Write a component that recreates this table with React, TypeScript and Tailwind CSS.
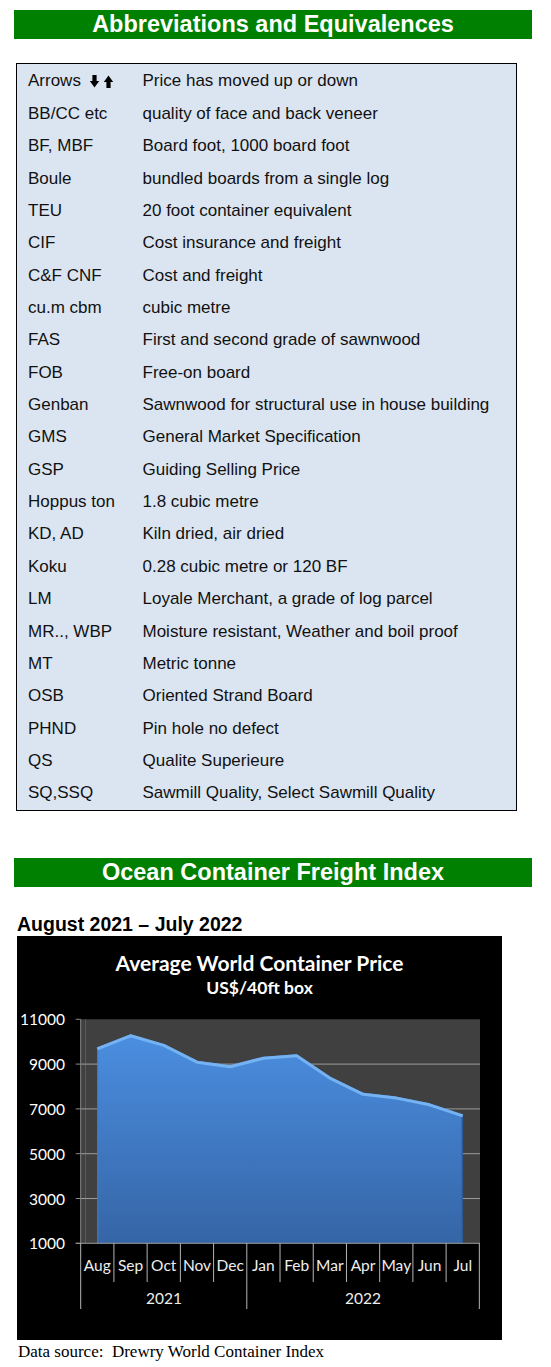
const rows: [string, string][] = [
  ['Arrows', 'Price has moved up or down'],
  ['BB/CC etc', 'quality of face and back veneer'],
  ['BF, MBF', 'Board foot, 1000 board foot'],
  ['Boule', 'bundled boards from a single log'],
  ['TEU', '20 foot container equivalent'],
  ['CIF', 'Cost insurance and freight'],
  ['C&F CNF', 'Cost and freight'],
  ['cu.m cbm', 'cubic metre'],
  ['FAS', 'First and second grade of sawnwood'],
  ['FOB', 'Free-on board'],
  ['Genban', 'Sawnwood for structural use in house building'],
  ['GMS', 'General Market Specification'],
  ['GSP', 'Guiding Selling Price'],
  ['Hoppus ton', '1.8 cubic metre'],
  ['KD, AD', 'Kiln dried, air dried'],
  ['Koku', '0.28 cubic metre or 120 BF'],
  ['LM', 'Loyale Merchant, a grade of log parcel'],
  ['MR.., WBP', 'Moisture resistant, Weather and boil proof'],
  ['MT', 'Metric tonne'],
  ['OSB', 'Oriented Strand Board'],
  ['PHND', 'Pin hole no defect'],
  ['QS', 'Qualite Superieure'],
  ['SQ,SSQ', 'Sawmill Quality, Select Sawmill Quality'],
]

const months = ['Aug', 'Sep', 'Oct', 'Nov', 'Dec', 'Jan', 'Feb', 'Mar', 'Apr', 'May', 'Jun', 'Jul']
const prices = [9750, 10330, 9900, 9150, 8950, 9330, 9440, 8440, 7720, 7550, 7250, 6760]

// chart geometry (svg coords)
const X0 = 63.7
const CW = 33.22
const TOP = 13.3
const BOT = 237.3
const yOf = (v: number) => BOT - (v - 1000) * ((BOT - TOP) / 10000)
const cx = (i: number) => X0 + (i + 0.5) * CW

function ArrowsIcon() {
  return (
    <svg width="24" height="13" viewBox="0 0 24 13" className="ml-[9px] inline-block">
      <path d="M2.4 0 H6.6 V6 H9.2 L4.5 12.6 L-0.2 6 H2.4 Z" fill="#000" />
      <path d="M16.4 13 H20.6 V7 H23.2 L18.5 0.4 L13.8 7 H16.4 Z" fill="#000" />
    </svg>
  )
}

function GreenHeader({ title }: { title: string }) {
  return (
    <div className="ml-[14px] w-[518px] h-[29px] bg-[#008000] text-white font-bold text-[23.5px] leading-[29px] text-center font-['Liberation_Sans',Arial,sans-serif]">
      {title}
    </div>
  )
}

function Chart() {
  const pts = prices.map((p, i) => `${cx(i).toFixed(1)},${yOf(p).toFixed(1)}`)
  const area = `M${cx(0).toFixed(1)},${BOT} L${pts.join(' L')} L${cx(11).toFixed(1)},${BOT} Z`
  const yTicks = [11000, 9000, 7000, 5000, 3000, 1000]

  return (
    <div className="ml-[17px] mt-[1px] w-[485px] h-[404px] bg-black text-white font-['Lato',sans-serif]">
      <div className="h-[70px] pt-[14px] flex flex-col items-center">
        <div className="text-[21px] font-bold leading-[25px]">Average World Container Price</div>
        <div className="text-[17.5px] font-bold leading-[20px] mt-[3px]">US$/40ft box</div>
      </div>
      <svg width="485" height="334" viewBox="0 0 485 334" className="block">
        <defs>
          <linearGradient id="fillGrad" x1="0" y1="0" x2="0" y2="1">
            <stop offset="0" stopColor="#4b8ee0" />
            <stop offset="1" stopColor="#3565a6" />
          </linearGradient>
        </defs>

        {/* plot area */}
        <rect x={X0} y={TOP} width={463 - X0} height={BOT - TOP} fill="#404040" />
        <line x1={68.5} y1={TOP} x2={68.5} y2={BOT} stroke="#5a5a5a" strokeWidth="1" />

        {/* gridlines */}
        {[9000, 7000, 5000, 3000].map(v => (
          <line key={v} x1={X0} y1={yOf(v)} x2={463} y2={yOf(v)} stroke="#9a9a9a" strokeWidth="1" />
        ))}

        {/* area */}
        <path d={area} fill="url(#fillGrad)" />
        <line x1={cx(11) - 0.5} y1={yOf(prices[11]) + 2} x2={cx(11) - 0.5} y2={BOT} stroke="#2f5c99" strokeWidth="1.5" />
        <line x1={cx(0) + 0.5} y1={yOf(prices[0]) + 2} x2={cx(0) + 0.5} y2={BOT} stroke="#3f7cc6" strokeWidth="1" />
        <polyline
          points={pts.join(' ')}
          fill="none"
          stroke="#74b2f2"
          strokeWidth="3"
          strokeLinejoin="round"
          transform="translate(0,1.5)"
        />

        {/* y axis */}
        <line x1={X0} y1={TOP} x2={X0} y2={BOT} stroke="#8a8a8a" strokeWidth="1" />
        {yTicks.map(v => (
          <g key={v}>
            <line x1={X0 - 5} y1={yOf(v)} x2={X0} y2={yOf(v)} stroke="#8a8a8a" strokeWidth="1" />
            <text x={48} y={yOf(v)} fill="#fff" fontSize="15.5" textAnchor="end" dominantBaseline="central">
              {v}
            </text>
          </g>
        ))}

        {/* x axis */}
        <line x1={X0 - 5} y1={BOT} x2={463} y2={BOT} stroke="#9a9a9a" strokeWidth="1" />
        {Array.from({ length: 13 }).map((_, i) => {
          const x = X0 + i * CW
          const long = i === 0 || i === 5 || i === 12
          return <line key={i} x1={x} y1={BOT} x2={x} y2={long ? 303 : 276} stroke="#b5b5b5" strokeWidth="1" />
        })}
        {months.map((m, i) => (
          <text key={m} x={cx(i)} y={259} fill="#eee" fontSize="15.5" textAnchor="middle" dominantBaseline="central">
            {m}
          </text>
        ))}
        <text x={147} y={292} fill="#eee" fontSize="15.5" textAnchor="middle" dominantBaseline="central">2021</text>
        <text x={346} y={292} fill="#eee" fontSize="15.5" textAnchor="middle" dominantBaseline="central">2022</text>
      </svg>
    </div>
  )
}

export default function App() {
  return (
    <div className="w-[551px] min-h-[1367px] bg-white pt-[10px]">
      <GreenHeader title="Abbreviations and Equivalences" />

      {/* abbreviations table */}
      <div className="ml-[16px] mt-[24px] w-[501px] border border-black bg-[#dbe5f1] py-[1px] text-[17px] text-[#111] font-['Liberation_Sans',Arial,sans-serif]">
        {rows.map(([abbr, desc]) => (
          <div key={abbr} className="flex items-center h-[32.36px]">
            <div className="w-[125.5px] pl-[11px] flex items-center whitespace-nowrap">
              {abbr}
              {abbr === 'Arrows' && <ArrowsIcon />}
            </div>
            <div className="whitespace-nowrap">{desc}</div>
          </div>
        ))}
      </div>

      <div className="mt-[47px]">
        <GreenHeader title="Ocean Container Freight Index" />
      </div>

      <div className="ml-[17px] mt-[26px] text-[19.5px] leading-[22px] font-bold text-black font-['Liberation_Sans',Arial,sans-serif]">
        August 2021 – July 2022
      </div>

      <Chart />

      <div className="ml-[18px] mt-[2px] text-[17px] leading-[20px] text-black font-['Liberation_Serif','Times_New_Roman',serif]">
        Data source:&nbsp; Drewry World Container Index
      </div>
    </div>
  )
}
